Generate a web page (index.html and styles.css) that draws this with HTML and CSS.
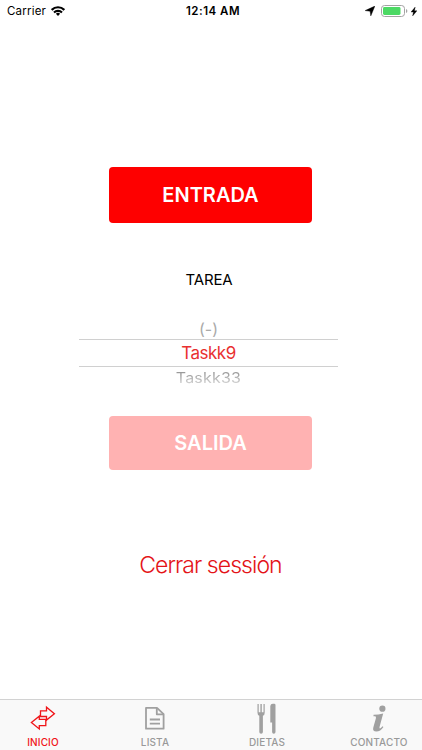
FILE: index.html
```html
<!DOCTYPE html>
<html lang="es">
<head>
<meta charset="utf-8">
<meta name="viewport" content="width=device-width, initial-scale=1">
<title>Inicio</title>
<link rel="stylesheet" href="styles.css">
</head>
<body>
<div class="app">
  <header class="status">
    <div class="status-left">
      <span class="carrier">Carrier</span>
      <svg class="wifi" width="14" height="10" viewBox="0 0 14 10"><g fill="none" stroke="#000" stroke-width="2.1"><path d="M.7 3.9a8.9 8.9 0 0 1 12.6 0"/><path d="M3 6.5a5.7 5.7 0 0 1 8 0"/></g><path d="M7 9.9 4.9 7.8a3 3 0 0 1 4.2 0z"/></svg>
    </div>
    <span class="time">12:14 AM</span>
    <div class="status-right">
      <svg width="10" height="10" viewBox="0 0 10 10"><path d="M9.9.1 5.8 9.9 5.1 5.3.1 4.6z" stroke="#000" stroke-width=".4"/></svg>
      <svg class="battery" width="27" height="12" viewBox="0 0 27 12"><rect x=".5" y=".5" width="23" height="11" rx="3" fill="#fff" stroke="#a3a3a3"/><rect x="2" y="2" width="17.5" height="8" rx="1.4" fill="#4cd964"/><path d="M25 4q1.4.5 1.4 2T25 8z" fill="#a3a3a3"/></svg>
      <svg class="bolt" width="6" height="9" viewBox="0 0 6 9"><path d="M4.2 0 0 5.1h2.4L1.6 9 6 3.7H3.5z" stroke="#000" stroke-width=".3"/></svg>
    </div>
  </header>
  <main class="content">
    <button class="btn btn-in">ENTRADA</button>
    <h1 class="heading"><span>TAREA</span></h1>
    <div class="picker">
      <div class="option option-prev"><span>(-)</span></div>
      <div class="option option-current"><span>Taskk9</span></div>
      <div class="option option-next"><span>Taskk33</span></div>
    </div>
    <button class="btn btn-out" disabled>SALIDA</button>
    <a class="logout">Cerrar sessión</a>
  </main>
  <nav class="tabs">
    <a class="tab tab-active">
      <svg width="28" height="34" viewBox="0 0 28 34"><g fill="none" stroke="#f01418" stroke-width="1.3"><path d="M11.5 10.8h6V7.2l7.9 6.5-7.9 6.4v-3.6h-6z"/><path d="M16.8 19.4h-6.5v-3.2L2.4 22.5l7.9 6.4v-3.2h6.5z"/></g></svg>
      <span>INICIO</span>
    </a>
    <a class="tab">
      <svg width="28" height="34" viewBox="0 0 28 34"><g fill="none" stroke="#a0a0a0" stroke-width="1.8" stroke-linejoin="round"><path d="M5 7.9h11l6.6 6.2v14.6H5z"/><path d="M15.8 8v6.3h6.5M8.8 19.5H19M8.8 23.7H19"/></g></svg>
      <span>LISTA</span>
    </a>
    <a class="tab">
      <svg width="28" height="34" viewBox="0 0 28 34"><g fill="#a0a0a0"><path d="M4.5 4h1.2v8.2h1.7V4h1.4v8.2h1.7V4h1.2v8.7q0 2.5-1.8 3.1v16.3q0 1.7-1.8 1.7t-1.8-1.7V15.8q-1.8-.6-1.8-3.1z"/><path d="M17.3 6q.3-2.2 2.5-2.2h1.4q1.3 0 1.3 1.3v27q0 1.7-1.7 1.7t-1.7-1.7V22.5h-1.8z"/></g></svg>
      <span>DIETAS</span>
    </a>
    <a class="tab">
      <svg width="28" height="34" viewBox="0 0 28 34"><g fill="#a0a0a0"><circle cx="17.4" cy="8.7" r="3.1"/><path d="M8.6 14.8q4.8-.2 9.6-1.4l-3.6 13.4q-.4 1.8.4 1.7 1-.2 2.5-2.2l.9.6q-3 4.6-7 4.6-4.2 0-3.1-4l2.6-9.3q.5-1.9-.9-1.9H8.4z"/></g></svg>
      <span>CONTACTO</span>
    </a>
  </nav>
</div>
</body>
</html>
```
FILE: styles.css
```css
* { box-sizing: border-box; }
body { margin: 0; background: #fff; font-family: Inter, "Liberation Sans", sans-serif; color: #000; }
.app { width: 422px; height: 750px; display: flex; flex-direction: column; overflow: hidden; }
svg { display: block; }

.status { height: 22px; flex: none; display: grid; grid-template-columns: 1fr auto 1fr; align-items: center; padding: 0 5px 0 7px; font-size: 11.5px; line-height: 22px; }
.status-left, .status-right { display: flex; align-items: center; }
.status-left { gap: 6px; }
.carrier { letter-spacing: .2px; }
.wifi { margin-left: -1px; }
.status-right { justify-content: flex-end; }
.battery { margin-left: 6px; }
.bolt { margin-left: 3px; }
.time { margin-left: 2px; font-weight: 600; letter-spacing: .5px; }

.content { flex: 1; display: flex; flex-direction: column; align-items: center; padding-top: 145px; }
.btn { width: 203px; margin: 0 1px 0 0; padding: 0; border: 0; border-radius: 4px; color: #fff; font-family: inherit; font-size: 20px; font-weight: 600; }
.btn-in { height: 56px; background: #fe0000; }
.btn-out { height: 54px; margin-top: 30px; background: #ffb2b2; }
.heading { margin: 46px 4px 0 0; font-size: 15px; font-weight: 400; line-height: 22px; letter-spacing: -.2px; }
.picker { width: 259px; margin: 26px 5px 0 0; text-align: center; height: 69px; }
.option { line-height: 19px; font-size: 16px; color: #aaa; }
.option span { display: inline-block; }
.option-prev { height: 22px; line-height: 25px; }
.option-current { height: 28px; border-top: 1px solid #d0d0d0; border-bottom: 1px solid #d0d0d0; color: #e93030; font-size: 17px; letter-spacing: -.5px; line-height: 27px; }
.option-next { line-height: 20px; }
.option-next span { transform: scaleY(.92); letter-spacing: .2px; background: linear-gradient(#999 25%, #d4d4d4 90%); background-clip: text; -webkit-background-clip: text; color: transparent; }
.logout { margin: 80px 1px 0 0; font-size: 23px; font-weight: 300; line-height: 31px; letter-spacing: -.95px; color: #e41318; }

.tabs { height: 51px; flex: none; display: grid; grid-template-columns: repeat(4, 112px); justify-content: center; background: #f9f9f9; border-top: 1px solid #d2d2d2; color: #999; font-size: 10px; }
.tab { display: flex; flex-direction: column; align-items: center; }
.tab span { line-height: 17px; font-weight: 500; letter-spacing: .15px; }
.tab-active { color: #f01418; }
```
